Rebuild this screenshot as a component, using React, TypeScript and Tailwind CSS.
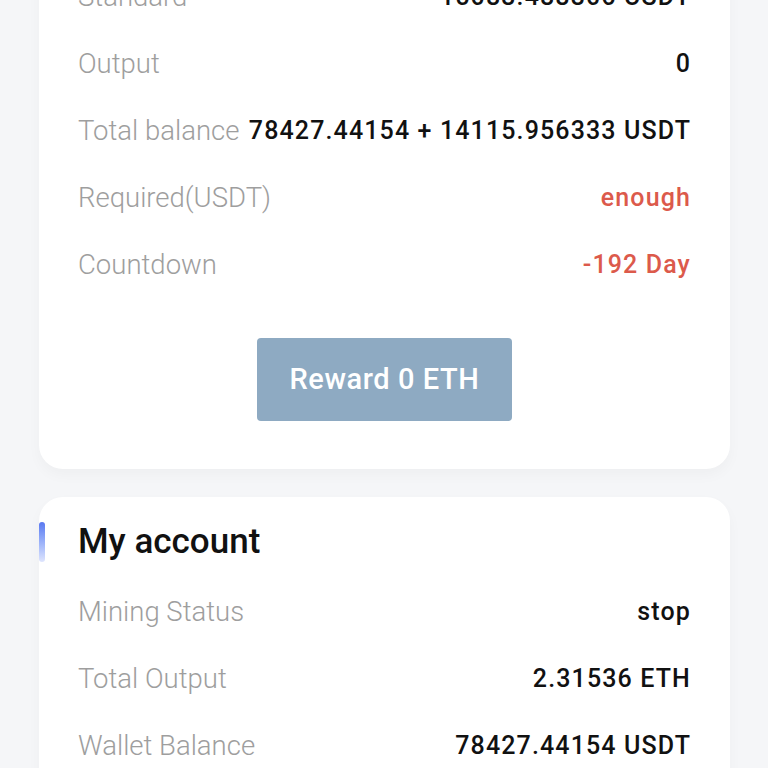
type Row = { label: string; value: string; tone?: 'red' }

const mining: Row[] = [
  { label: 'Standard', value: '15083.488306 USDT' },
  { label: 'Output', value: '0' },
  { label: 'Total balance', value: '78427.44154 + 14115.956333 USDT' },
  { label: 'Required(USDT)', value: 'enough', tone: 'red' },
  { label: 'Countdown', value: '-192 Day', tone: 'red' },
]

const account: Row[] = [
  { label: 'Mining Status', value: 'stop' },
  { label: 'Total Output', value: '2.31536 ETH' },
  { label: 'Wallet Balance', value: '78427.44154 USDT' },
]

function InfoRow({ label, value, tone }: Row) {
  return (
    <div className="flex h-[67px] items-center justify-between gap-2">
      <span className="whitespace-nowrap text-[27.5px] font-light text-[#9e9e9e]">{label}</span>
      <span
        className={
          'whitespace-nowrap text-[25px] font-medium tracking-[0.045em] ' +
          (tone === 'red' ? 'text-[#dc5a4b]' : 'text-[#111111]')
        }
      >
        {value}
      </span>
    </div>
  )
}

export default function App() {
  return (
    <div className="min-h-[768px] overflow-hidden bg-[#f5f6f8] font-['Roboto',sans-serif]">
      <div className="mr-[38px] ml-[39px] -mt-[37px] flex flex-col gap-[28px] pb-10">
        <section className="rounded-b-[24px] bg-white px-[39px] pb-[48px] shadow-[0_6px_14px_rgba(0,0,0,0.03)]">
          {mining.map((row) => (
            <InfoRow key={row.label} {...row} />
          ))}
          <div className="mt-[40px] flex justify-center">
            <button
              type="button"
              className="h-[83px] w-[255px] rounded-[4px] bg-[#8eaac2] text-[29px] font-medium tracking-[0.02em] text-white"
            >
              Reward 0 ETH
            </button>
          </div>
        </section>

        <section className="relative rounded-[24px] bg-white px-[39px] pt-[25px] pb-4 shadow-[0_6px_14px_rgba(0,0,0,0.03)]">
          <span className="absolute left-0 top-[25px] h-[40px] w-[6px] rounded-full bg-gradient-to-b from-[#5a78f0] to-[#dfe5fd]" />
          <h2 className="flex h-[40px] items-center text-[35px] font-medium text-[#111111]">My account</h2>
          <div className="mt-[16px]">
            {account.map((row) => (
              <InfoRow key={row.label} {...row} />
            ))}
          </div>
        </section>
      </div>
    </div>
  )
}
